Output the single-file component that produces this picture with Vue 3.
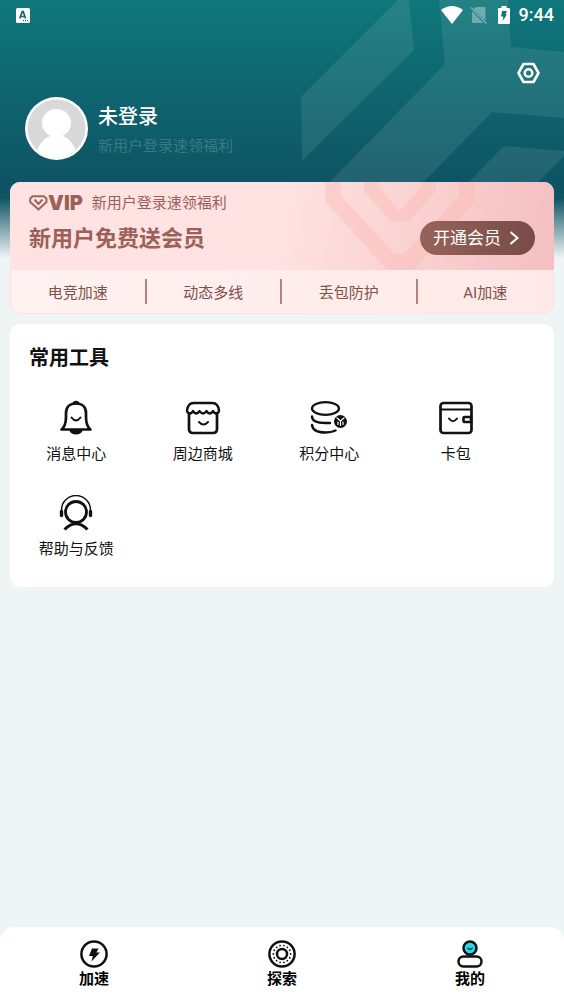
<script setup>
const features = ['电竞加速', '动态多线', '丢包防护', 'AI加速']
const tools = [
  { id: 'bell', label: '消息中心' },
  { id: 'shop', label: '周边商城' },
  { id: 'points', label: '积分中心' },
  { id: 'wallet', label: '卡包' },
  { id: 'help', label: '帮助与反馈' }
]
const tabs = [
  { id: 'boost', label: '加速' },
  { id: 'explore', label: '探索' },
  { id: 'mine', label: '我的' }
]
const rays = Array.from({ length: 14 }, (_, i) => {
  const a = (i * Math.PI) / 7
  return { x: 14 + 8.6 * Math.cos(a), y: 14 + 8.6 * Math.sin(a) }
})
</script>

<template>
  <div class="page">
    <div class="backdrop" aria-hidden="true">
      <svg class="pattern" width="264" height="200" viewBox="0 0 264 200">
        <path d="M1 97 98 0h11l5 50L2 161zM139 0l6 64L12 200h94l86-88 72 6V52l-53-5-3-47zM151 200l53-54 60 5v5l-44 44z" fill="#fff" fill-opacity=".085" />
      </svg>
    </div>

    <header>
      <div class="status">
        <svg width="14" height="16" viewBox="0 0 14 16">
          <rect y="1" width="14" height="15" rx="1.5" fill="#fff" />
          <path d="M3.800 11.500 6.200 4.500h1l2.400 7M5 9.500h3.500" fill="none" stroke="#10696f" stroke-width="1.700" />
          <path d="M7 13.500h5" stroke="#10696f" stroke-dasharray="1 1" />
        </svg>
        <div class="status-right">
          <svg width="22" height="18" viewBox="0 0 22 18"><path d="M0 4Q11-4 22 4L11 18z" fill="#fff" /></svg>
          <svg class="sim" width="18" height="18" viewBox="0 0 18 18">
            <path d="M6 1h8.500q1 0 1 1v12.500L3.500 3zM2 5l11.500 12H3q-1 0-1-1z" fill="#fff" fill-opacity=".35" />
            <path d="m1 1.500 15.500 16" stroke="#fff" stroke-opacity=".4" stroke-width="1.300" />
          </svg>
          <svg class="battery" width="12" height="18" viewBox="0 0 12 18">
            <path d="M3.500 0h5v2H11q1 0 1 1v14q0 1-1 1H1q-1 0-1-1V3q0-1 1-1h2.500z" fill="#fff" />
            <path d="M4 5h5L7.500 8.500H9L4.500 15l.8-4.500H3z" fill="#14757a" />
          </svg>
          <span class="time">9:44</span>
        </div>
      </div>
      <div class="toolbar">
        <button class="settings" type="button" aria-label="设置">
          <svg width="24" height="24" viewBox="0 0 24 24" fill="none" stroke="#fff" stroke-width="2.600" stroke-linejoin="round">
            <path d="M7.500 3h10l5 9-5 9h-10l-5-9z" /><circle cx="12.500" cy="12" r="3.800" />
          </svg>
        </button>
      </div>
      <div class="profile">
        <svg width="63" height="63" viewBox="0 0 63 63">
          <defs><clipPath id="face"><circle cx="31.500" cy="31.500" r="29" /></clipPath></defs>
          <circle cx="31.500" cy="31.500" r="31.500" fill="#fff" />
          <circle cx="31.500" cy="31.500" r="29" fill="#d9d9d9" />
          <g clip-path="url(#face)" fill="#fff">
            <ellipse cx="31.500" cy="26" rx="14.500" ry="14" />
            <path d="M25 36h13v3q10 4 14 18v6H11v-6q4-14 14-18z" />
          </g>
        </svg>
        <div>
          <h1>未登录</h1>
          <p>新用户登录速领福利</p>
        </div>
      </div>
    </header>

    <main>
      <section class="vip">
        <div class="vip-top">
          <svg class="emblem" width="152" height="88" viewBox="0 0 152 88" aria-hidden="true">
            <path d="M10 0H1v19l62 69h27l61-69V0h-16v14L82 70q-6 5-13 0L17 14V0z" />
            <path d="M40 0v9l27 31h18l27-31V0H97v6L75 29 56 6V0z" />
          </svg>
          <div class="vip-copy">
            <div class="vip-tag">
              <svg width="19" height="16" viewBox="0 0 19 16" fill="none" stroke="#a0645d" stroke-linejoin="round">
                <path d="M3.500 1.200h11.500l2.500 2.500v3.300L9.500 14.500 1.200 7V3.700z" stroke-width="2" />
                <path d="m5.500 4.500 4 4.500 4-4.500" stroke-width="2" />
              </svg>
              <strong>VIP</strong>
              <span>新用户登录速领福利</span>
            </div>
            <h2>新用户免费送会员</h2>
          </div>
          <button class="join" type="button">
            <span>开通会员</span>
            <svg width="10" height="14" viewBox="0 0 10 14"><path d="m1.500 1 7 6-7 6" fill="none" stroke="#fff" stroke-width="2" /></svg>
          </button>
        </div>
        <ul class="features">
          <li v-for="item in features" :key="item">{{ item }}</li>
        </ul>
      </section>

      <section class="tools">
        <h2>常用工具</h2>
        <div class="grid">
          <button v-for="tool in tools" :key="tool.id" class="tool" type="button">
            <svg width="38" height="36" viewBox="0 0 38 36" fill="none" stroke="#111" stroke-width="2.700" stroke-linecap="round" stroke-linejoin="round">
              <template v-if="tool.id === 'bell'">
                <path d="M4.500 29.500Q9 26 9 17v-4C9 7 13 3.500 19 3.500S29 7 29 13v4q0 9 4.500 12.500z" />
                <path d="M17 2.800Q19 1.500 21 2.800" />
                <path d="M12 30h14q-2 4.500-7 4.500t-7-4.500z" fill="#111" stroke="none" />
                <path d="M14.500 17.500q4.500 6 9 0" stroke-width="2" />
              </template>
              <template v-else-if="tool.id === 'shop'">
                <path d="M5 13v16q0 4 4 4h20q4 0 4-4V13" />
                <path d="M6 13.500q-3-.5-3-3Q4 3 9.500 3h19Q34 3 35 10.500q0 2.500-3 3-2-.5-3-2.500-1 2-3.200 2.500-2.300-.5-3.300-2.500-1.200 2-3.500 2.500-2.300-.5-3.500-2.500-1 2-3.300 2.500Q10 13 9 11q-1 2-3 2.500z" fill="#fff" stroke-width="2.400" />
                <path d="M15 22q4.500 5 9 0" stroke-width="2" />
              </template>
              <template v-else-if="tool.id === 'points'">
                <ellipse cx="15.500" cy="8.500" rx="13.500" ry="6.300" stroke-width="2.300" />
                <path d="M2 16.500q0 6.500 13.500 6.500h4.500M2 25q1 7.500 13.500 7.500 6 0 10-2" stroke-width="2.400" />
                <circle cx="30.500" cy="21.500" r="6.500" fill="#111" stroke="none" />
                <path d="m27 18 3.500 3 3.500-3M30.500 21v4.500M28 22v2.500M33 22v2.500" stroke="#fff" stroke-width="1.200" />
              </template>
              <template v-else-if="tool.id === 'wallet'">
                <rect x="3.500" y="3" width="31" height="30" rx="3" />
                <path d="M4 9.500h30" stroke-width="2" />
                <path d="M34 17h-6.500q-1 0-1 1v3q0 1 1 1H34z" fill="#fff" stroke-width="2.600" />
                <path d="M12 18.500q4 5.500 8 0" stroke-width="2" />
              </template>
              <template v-else>
                <circle cx="19" cy="17" r="10.500" stroke-width="2.800" />
                <path d="M4.500 15a14.500 14.500 0 0 1 29 0" stroke-width="1.500" />
                <path d="M4.500 16.500v4M33.500 16.500v4" stroke-width="3.400" />
                <path d="M7.500 34.500q11.500-11.500 23 0" stroke-width="3" stroke-linecap="butt" />
              </template>
            </svg>
            <span>{{ tool.label }}</span>
          </button>
        </div>
      </section>
    </main>

    <nav>
      <a v-for="tab in tabs" :key="tab.id" :href="'#' + tab.id">
        <svg width="28" height="28" viewBox="0 0 28 28" fill="none" stroke="#111" stroke-width="2.500">
          <template v-if="tab.id === 'boost'">
            <circle cx="14" cy="14" r="12.600" />
            <path d="M12 8.500h6.500l-2 4h3.500L11.500 21.500l1.300-5.500H9z" fill="#111" stroke="none" />
          </template>
          <template v-else-if="tab.id === 'explore'">
            <circle cx="14" cy="14" r="12.600" />
            <circle cx="14" cy="14" r="5" />
            <circle v-for="(ray, i) in rays" :key="i" :cx="ray.x" :cy="ray.y" r=".9" fill="#111" stroke="none" />
          </template>
          <template v-else>
            <circle cx="14" cy="8" r="6.500" fill="#1fdcec" />
            <path d="M11.500 8q2.500 2.500 5 0" stroke-width="1.200" />
            <rect x="2.500" y="16.500" width="23" height="10" rx="5" fill="#fff" />
          </template>
        </svg>
        <span>{{ tab.label }}</span>
      </a>
    </nav>
  </div>
</template>

<style>
body {
  margin: 0;
}
</style>

<style scoped>
.page {
  position: relative;
  display: flex;
  flex-direction: column;
  min-height: 100vh;
  background: #eff4f5;
  color: #111;
  font-family: Roboto, "Noto Sans CJK SC", sans-serif;
}
h1, h2, p, ul {
  margin: 0;
  padding: 0;
}
svg {
  display: block;
  flex: none;
}
button {
  padding: 0;
  border: 0;
  background: none;
  color: inherit;
  font: inherit;
  cursor: pointer;
}
.backdrop {
  position: absolute;
  top: 0;
  left: 0;
  right: 0;
  height: 258px;
  overflow: hidden;
  background: linear-gradient(#0f777b, #0e5464 180px, #0e5464 198px, #eff4f5);
}
.pattern {
  position: absolute;
  top: 0;
  right: 0;
}
header, main {
  position: relative;
}
.status {
  display: flex;
  align-items: center;
  justify-content: space-between;
  height: 30px;
  padding: 0 10px 0 16px;
  color: #fff;
}
.status-right {
  display: flex;
  align-items: center;
}
.sim {
  margin-left: 7px;
}
.battery {
  margin: 0 9px 0 10px;
}
.time {
  font-size: 18px;
  line-height: 20px;
  font-weight: 500;
}
.toolbar {
  display: flex;
  justify-content: flex-end;
  padding: 31px 24px 12px;
}
.profile {
  display: flex;
  gap: 10px;
  padding: 0 25px 22px;
  color: #fff;
}
h1 {
  padding-top: 5px;
  font-size: 20px;
  line-height: 30px;
  font-weight: 500;
}
.profile p {
  padding-top: 3px;
  font-size: 15px;
  line-height: 22px;
  color: #3a7983;
}
main {
  display: flex;
  flex-direction: column;
  gap: 10px;
  flex: 1;
  padding: 0 10px;
}
.vip {
  overflow: hidden;
  border-radius: 10px;
  background: #ffe0e0;
  color: #9b6058;
}
.vip-top {
  position: relative;
  display: flex;
  align-items: flex-end;
  justify-content: space-between;
  height: 88px;
  padding: 0 19px;
  background: linear-gradient(100deg, #ffe2e2 50%, #f4bfc0);
}
.emblem {
  position: absolute;
  top: 0;
  right: 78px;
  fill: #fbb9b3;
  fill-opacity: 0.42;
}
.vip-copy {
  align-self: flex-start;
  padding-top: 10px;
}
.vip-tag {
  display: flex;
  align-items: center;
  font-size: 15px;
  line-height: 22px;
}
.vip-tag strong {
  margin-right: 9px;
  font-family: Inter, sans-serif;
  font-size: 20px;
  font-weight: 900;
}
.vip h2 {
  padding-top: 8px;
  font-size: 22px;
  line-height: 34px;
  font-weight: 700;
}
.join {
  position: relative;
  display: flex;
  align-items: center;
  gap: 8px;
  height: 34px;
  margin-bottom: 15px;
  padding: 0 16px 0 13px;
  border-radius: 17px;
  background: linear-gradient(90deg, #966359, #784b47);
  color: #fff;
  font-size: 17px;
  line-height: 24px;
}
.features {
  display: grid;
  grid-template-columns: repeat(4, 1fr);
  height: 43px;
  margin: 0 1px 1px;
  align-items: center;
  border-radius: 0 0 9px 9px;
  background: linear-gradient(90deg, #fff2f1, #ffe9e8);
  color: #805049;
  font-size: 15px;
  list-style: none;
}
.features li {
  padding-top: 3px;
  line-height: 22px;
  text-align: center;
}
.features li:not(:last-child) {
  border-right: 2px solid #b5827b;
}
.tools {
  padding: 19px 0 27px;
  border-radius: 10px;
  background: #fff;
}
.tools h2 {
  padding-left: 19px;
  font-size: 20px;
  line-height: 30px;
  font-weight: 700;
}
.grid {
  display: grid;
  grid-template-columns: repeat(4, 1fr);
  row-gap: 30px;
  padding: 27px 35px 0 3px;
}
.tool {
  display: flex;
  flex-direction: column;
  align-items: center;
  gap: 7px;
  font-size: 15px;
  line-height: 22px;
}
nav {
  position: sticky;
  bottom: 0;
  display: flex;
  height: 75px;
  border-radius: 14px 14px 0 0;
  background: #fff;
}
nav a {
  display: flex;
  flex: 1;
  flex-direction: column;
  align-items: center;
  padding-top: 13px;
  color: #000;
  font-size: 15px;
  line-height: 22px;
  font-weight: 700;
  text-decoration: none;
}
</style>
